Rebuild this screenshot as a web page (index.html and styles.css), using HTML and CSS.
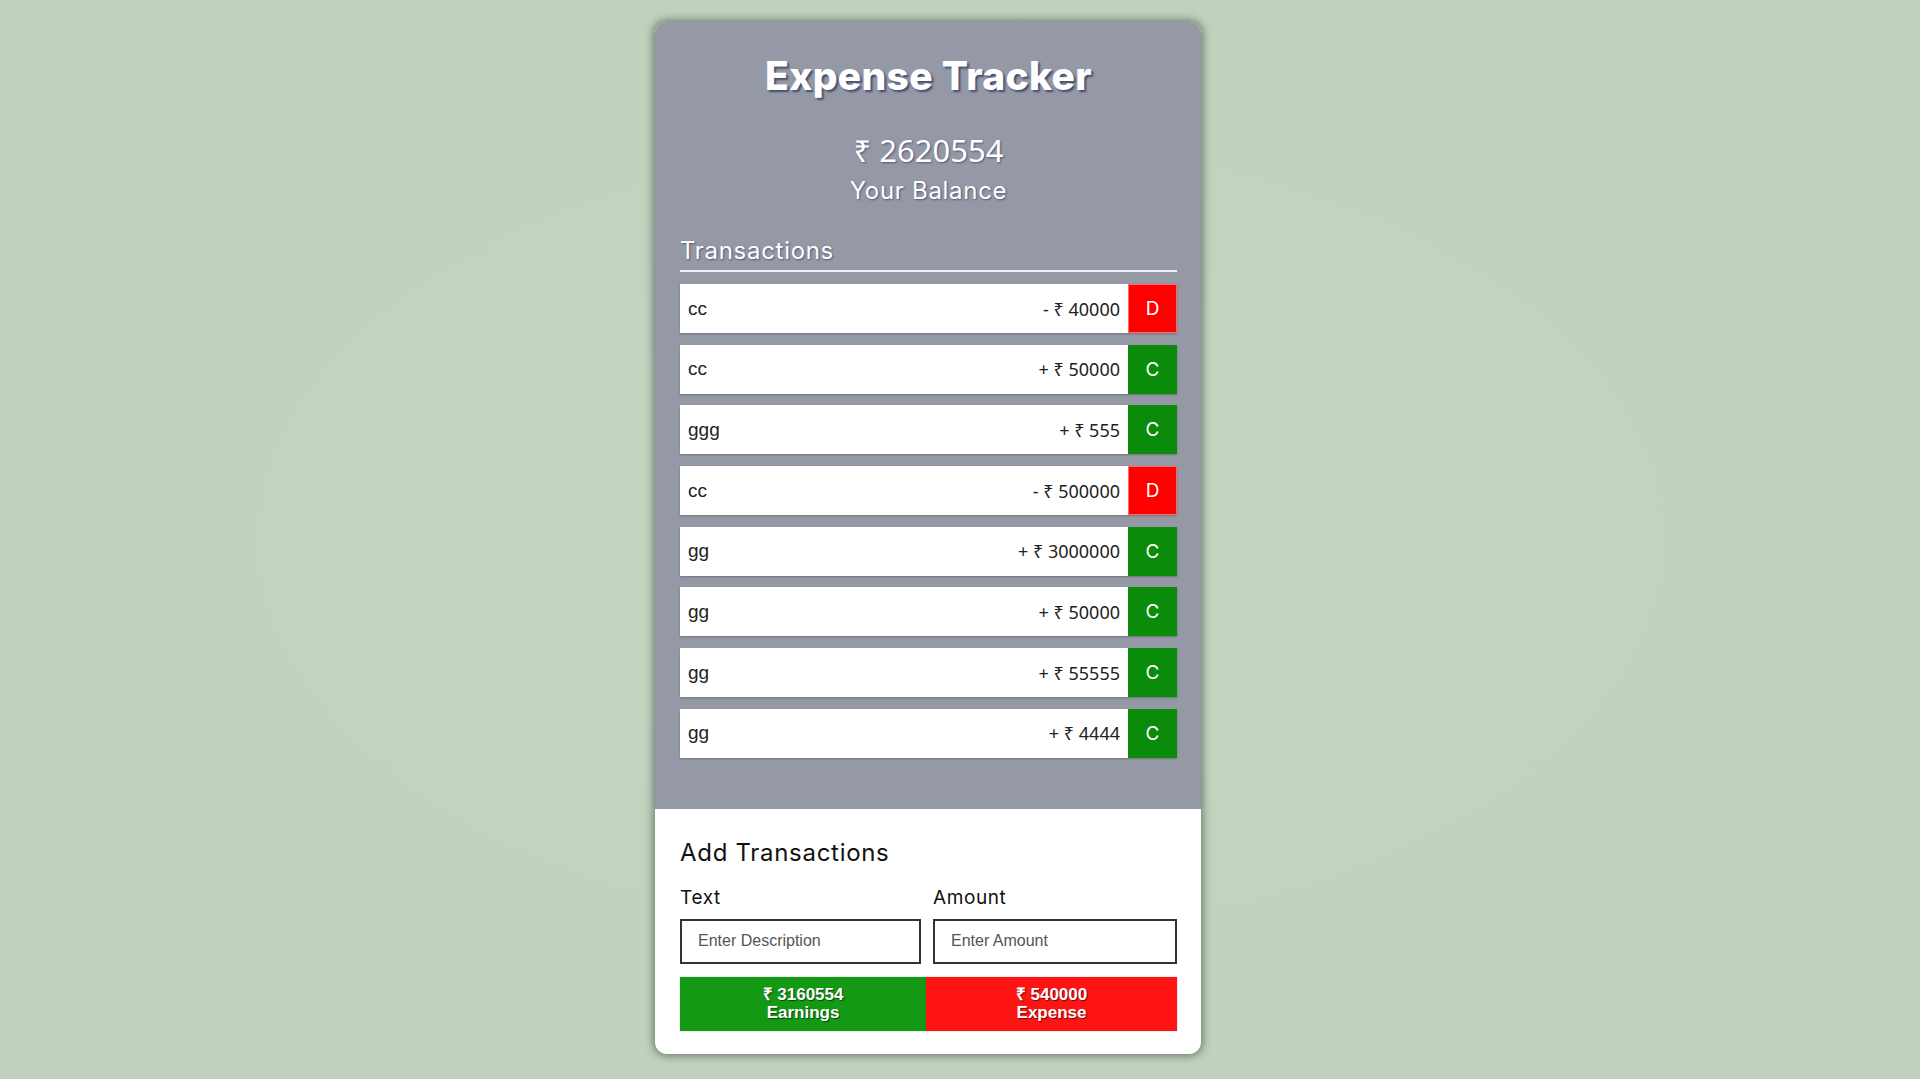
FILE: index.html
```html
<!DOCTYPE html>
<html lang="en">
<head>
<meta charset="utf-8">
<title>Expense Tracker</title>
<link rel="stylesheet" href="styles.css">
</head>
<body>
<main class="card">
  <section class="top">
    <h1 class="title">Expense Tracker</h1>
    <div class="balance">₹ 2620554</div>
    <div class="balance-label">Your Balance</div>
    <h2 class="section-title">Transactions</h2>
    <ul class="list">
      <li class="row"><span class="desc">cc</span><span class="amt">- ₹ 40000</span><span class="badge debit">D</span></li>
      <li class="row"><span class="desc">cc</span><span class="amt">+ ₹ 50000</span><span class="badge credit">C</span></li>
      <li class="row"><span class="desc">ggg</span><span class="amt">+ ₹ 555</span><span class="badge credit">C</span></li>
      <li class="row"><span class="desc">cc</span><span class="amt">- ₹ 500000</span><span class="badge debit">D</span></li>
      <li class="row"><span class="desc">gg</span><span class="amt">+ ₹ 3000000</span><span class="badge credit">C</span></li>
      <li class="row"><span class="desc">gg</span><span class="amt">+ ₹ 50000</span><span class="badge credit">C</span></li>
      <li class="row"><span class="desc">gg</span><span class="amt">+ ₹ 55555</span><span class="badge credit">C</span></li>
      <li class="row"><span class="desc">gg</span><span class="amt">+ ₹ 4444</span><span class="badge credit">C</span></li>
    </ul>
  </section>
  <section class="bottom">
    <h2 class="add-title">Add Transactions</h2>
    <div class="form">
      <label class="field">
        <span class="label">Text</span>
        <input class="input" type="text" placeholder="Enter Description">
      </label>
      <label class="field">
        <span class="label">Amount</span>
        <input class="input" type="text" placeholder="Enter Amount">
      </label>
    </div>
    <div class="buttons">
      <button class="btn earn">₹ 3160554<br>Earnings</button>
      <button class="btn spend">₹ 540000<br>Expense</button>
    </div>
  </section>
</main>
</body>
</html>
```
FILE: styles.css
```css
* { box-sizing: border-box; }
html, body { margin: 0; padding: 0; }
body {
  height: 1079px;
  overflow: hidden;
  background: radial-gradient(ellipse at center, #c6d4c2 0%, #c3d2bf 60%, #c2d1be 100%);
  display: flex;
  justify-content: center;
  align-items: flex-start;
  padding-right: 64px;
  font-family: Inter, "Noto Sans", sans-serif;
}
.card {
  margin-top: 22px;
  width: 546px;
  border-radius: 12px;
  overflow: hidden;
  box-shadow: 0 0 8px 2px rgba(40, 55, 40, 0.55);
  background: #fff;
}
.top {
  background: #9499a5;
  padding: 30px 24px 51px 25px;
  display: flex;
  flex-direction: column;
}
.title {
  margin: 0;
  text-align: center;
  color: #fff;
  font-size: 39px;
  line-height: 48px;
  font-weight: 800;
  letter-spacing: 0.3px;
  text-shadow: 2px 2px 2px rgba(35, 45, 90, 0.7);
}
.balance {
  margin-top: 31px;
  text-align: center;
  color: #fff;
  font-family: "Noto Sans", "Liberation Sans", sans-serif;
  font-size: 31px;
  line-height: 38px;
  text-shadow: 1px 1px 2px rgba(35, 45, 90, 0.6);
}
.balance-label {
  margin-top: 7px;
  text-align: center;
  color: #fff;
  font-size: 24px;
  letter-spacing: 0.7px;
  line-height: 30px;
  text-shadow: 1px 1px 2px rgba(35, 45, 90, 0.6);
}
.section-title {
  margin: 30px 0 0;
  color: #fff;
  font-size: 24px;
  letter-spacing: 0.7px;
  line-height: 30px;
  font-weight: 400;
  padding-bottom: 4px;
  border-bottom: 2px solid #eef0f3;
  text-shadow: 1px 1px 2px rgba(35, 45, 90, 0.6);
}
.list {
  list-style: none;
  margin: 12px 0 0;
  padding: 0;
  display: flex;
  flex-direction: column;
  gap: 11.7px;
}
.row {
  height: 49px;
  display: flex;
  align-items: center;
  background: #fff;
  box-shadow: 0 1px 2px rgba(0, 0, 0, 0.25);
  font-family: "Liberation Sans", "Noto Sans", sans-serif;
  font-size: 19px;
  color: #222;
}
.desc { padding-left: 8px; }
.amt {
  margin-left: auto;
  padding-right: 8px;
  font-family: "Noto Sans", "Liberation Sans", sans-serif;
  font-size: 18px;
}
.badge {
  width: 49px;
  height: 100%;
  display: flex;
  align-items: center;
  justify-content: center;
  color: #fff;
  font-family: Inter, sans-serif;
  font-size: 19px;
}
.debit { background: #ff0000; box-shadow: inset 0 0 0 1px #ff6a6a; }
.credit { background: #0a8c0a; }
.bottom {
  padding: 29px 24px 23px 25px;
}
.add-title {
  margin: 0;
  font-size: 24px;
  letter-spacing: 0.7px;
  line-height: 30px;
  font-weight: 400;
  color: #111;
}
.form {
  margin-top: 18px;
  display: grid;
  grid-template-columns: 241px 1fr;
  column-gap: 12px;
}
.field {
  display: flex;
  flex-direction: column;
  gap: 9px;
}
.label {
  font-size: 19px;
  letter-spacing: 0.6px;
  line-height: 24px;
  color: #111;
}
.input {
  height: 45px;
  border: 2px solid #333;
  border-radius: 0;
  padding: 0 16px;
  font-family: "Liberation Sans", Arial, sans-serif;
  font-size: 16px;
  color: #333;
  background: #fff;
  outline: none;
}
.input::placeholder { color: #555; }
.buttons {
  margin-top: 13px;
  display: flex;
  height: 54px;
  box-shadow: 0 0 1px rgba(0,0,0,0.4);
}
.btn {
  flex: 1;
  border: none;
  margin: 0;
  padding: 0;
  color: #fff;
  font-family: "Liberation Sans", Arial, sans-serif;
  font-weight: bold;
  font-size: 17px;
  line-height: 18px;
  text-shadow: 1px 1px 1px rgba(0, 0, 0, 0.55);
}
.earn { background: #139913; flex-basis: 49.5%; }
.spend { background: #ff1313; flex-basis: 50.5%; }
```
